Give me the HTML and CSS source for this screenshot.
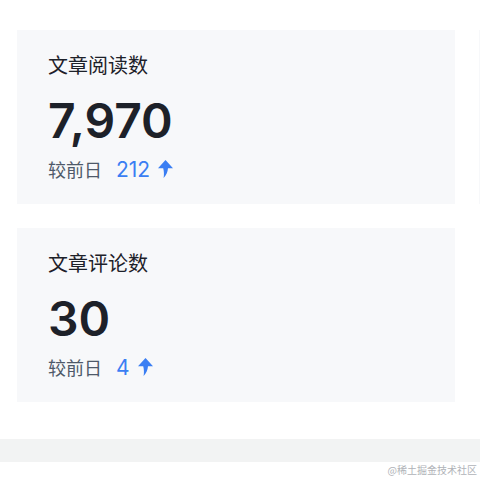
FILE: index.html
```html
<!DOCTYPE html>
<html>
<head>
<meta charset="UTF-8">
<title>数据概览</title>
<link rel="stylesheet" href="styles.css">
</head>
<body>

<div class="board">
	<div class="row">
		<div class="card">
			<div class="label">文章阅读数</div>
			<div class="count">7,970</div>
			<div class="diff">
				<span class="diffTxt">较前日</span>
				<span class="diffNum">212</span>
				<svg class="rise" width="15" height="18" viewBox="0 0 15 18">
					<path d="M7.5 0 L15 8.2 L10 8.2 C9.6 12 8.4 15.2 5.6 18 C6.2 14.5 6 11 5.2 8.2 L0 8.2 Z" fill="#3a7ef3"/>
				</svg>
			</div>
		</div>
		<div class="card"></div>
	</div>
	<div class="row">
		<div class="card">
			<div class="label">文章评论数</div>
			<div class="count">30</div>
			<div class="diff">
				<span class="diffTxt">较前日</span>
				<span class="diffNum">4</span>
				<svg class="rise" width="15" height="18" viewBox="0 0 15 18">
					<path d="M7.5 0 L15 8.2 L10 8.2 C9.6 12 8.4 15.2 5.6 18 C6.2 14.5 6 11 5.2 8.2 L0 8.2 Z" fill="#3a7ef3"/>
				</svg>
			</div>
		</div>
	</div>
</div>

<div class="band"></div>
<div class="mark">@稀土掘金技术社区</div>

</body>
</html>
```

FILE: styles.css
```css
* {margin: 0; padding: 0; box-sizing: border-box;}
body {width: 480px; height: 480px; overflow: hidden; background: #fff; font-family: "Noto Sans CJK SC", "Noto Sans", sans-serif; color: #1d2129;}
.board {padding: 30px 0 0 17px; display: flex; flex-direction: column; gap: 24px;}
.row {display: flex; gap: 24px;}
.card {flex: none; width: 438px; height: 174px; background: #f7f8fa; padding: 19px 31px 0;}
.label {font-size: 20px; line-height: 32px; color: #1d2129;}
.count {margin-top: 11px; font-family: Inter, "Liberation Sans", sans-serif; font-weight: 600; font-size: 48px; line-height: 58px; color: #1d2129;}
.diff {margin-top: 6px; display: flex; align-items: center; height: 26px;}
.diffTxt {font-size: 18px; color: #4e5969;}
.diffNum {margin-left: 14px; font-family: Inter, "Liberation Sans", sans-serif; font-size: 21px; color: #3a7ef3;}
.rise {margin-left: 8px;}
.band {margin-top: 37px; height: 23px; background: #f2f3f3;}
.mark {position: absolute; right: 3px; top: 462px; font-size: 10px; color: #b0b3b8;}
```
